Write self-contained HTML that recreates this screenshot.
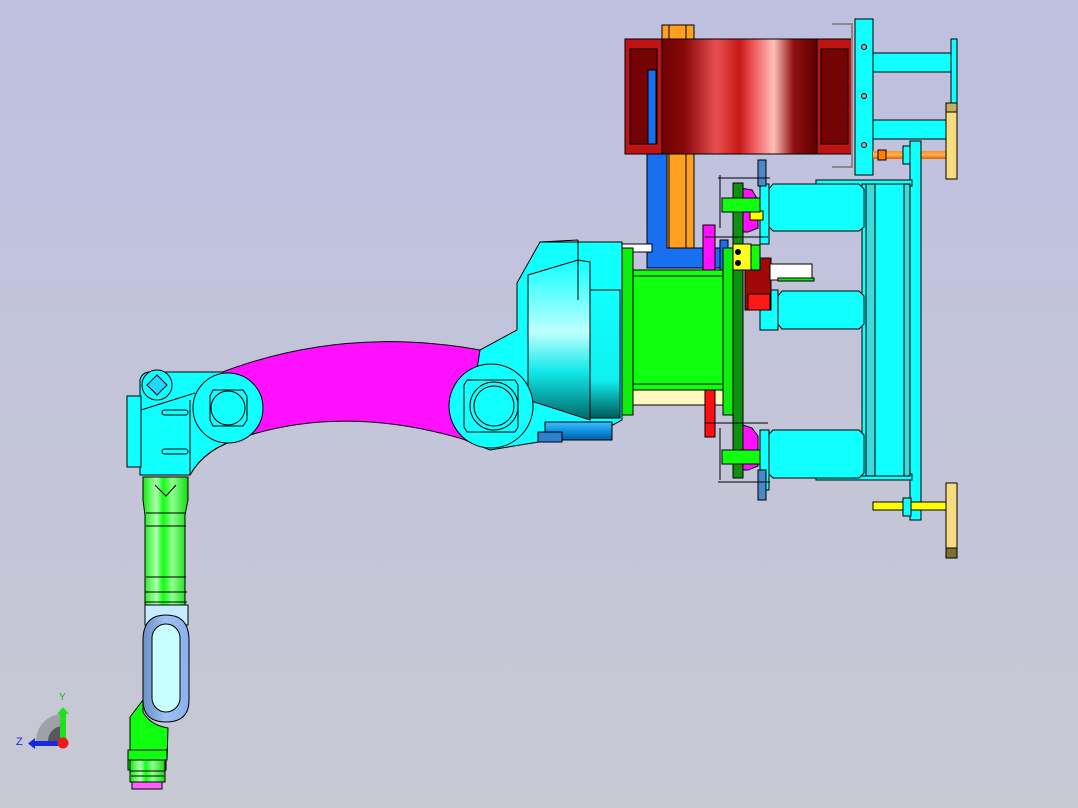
<!DOCTYPE html>
<html><head><meta charset="utf-8"><style>
html,body{margin:0;padding:0;width:1078px;height:808px;overflow:hidden}
svg{display:block}
</style></head><body>
<svg width="1078" height="808" viewBox="0 0 1078 808" xmlns="http://www.w3.org/2000/svg" stroke="#000" stroke-width="1">
<defs>
<linearGradient id="bg" x1="0" y1="0" x2="0" y2="1"><stop offset="0" stop-color="#bfc0e0"/><stop offset="1" stop-color="#c7c9d3"/></linearGradient>
<linearGradient id="drum" x1="0" x2="1"><stop offset="0" stop-color="#700000"/><stop offset=".15" stop-color="#8a0a0a"/><stop offset=".35" stop-color="#e85050"/><stop offset=".5" stop-color="#c81818"/><stop offset=".6" stop-color="#f06060"/><stop offset=".72" stop-color="#ffc0b8"/><stop offset=".85" stop-color="#901010"/><stop offset="1" stop-color="#600000"/></linearGradient>
<linearGradient id="cylV" x1="0" y1="0" x2="0" y2="1"><stop offset="0" stop-color="#10ffff"/><stop offset=".45" stop-color="#c0ffff"/><stop offset=".7" stop-color="#10e8e8"/><stop offset="1" stop-color="#006868"/></linearGradient>
<linearGradient id="cylV2" x1="0" y1="0" x2="0" y2="1"><stop offset="0" stop-color="#10ffff"/><stop offset=".7" stop-color="#10f0f0"/><stop offset="1" stop-color="#005a5a"/></linearGradient>
<linearGradient id="grn" x1="0" x2="1"><stop offset="0" stop-color="#10ee10"/><stop offset=".3" stop-color="#b0ffb0"/><stop offset=".45" stop-color="#10ff10"/><stop offset=".65" stop-color="#90ff90"/><stop offset="1" stop-color="#10dd10"/></linearGradient>
<linearGradient id="blu" x1="0" x2="1"><stop offset="0" stop-color="#6a90c8"/><stop offset=".5" stop-color="#a0c0f0"/><stop offset="1" stop-color="#88b0f0"/></linearGradient>
<linearGradient id="orod" x1="0" y1="0" x2="0" y2="1"><stop offset="0" stop-color="#ff9020"/><stop offset=".5" stop-color="#ffb050"/><stop offset="1" stop-color="#e06000"/></linearGradient>
<linearGradient id="bcyl" x1="0" y1="0" x2="0" y2="1"><stop offset="0" stop-color="#40c0ff"/><stop offset=".5" stop-color="#1090e0"/><stop offset="1" stop-color="#0060a0"/></linearGradient>
</defs>
<rect width="1078" height="808" fill="url(#bg)" stroke="none"/>

<rect x="662" y="25" width="32" height="225" fill="#ffa020"/>
<line x1="669" y1="25" x2="669" y2="250"/><line x1="686" y1="25" x2="686" y2="250"/>
<path d="M647 150 H667 V248 H722 V268 H647 Z" fill="#1870f0"/>
<rect x="720" y="240" width="8" height="30" fill="#1870f0"/>

<rect x="625" y="39" width="227" height="115" fill="#c01414"/>
<rect x="662" y="39" width="155" height="115" fill="url(#drum)"/>
<rect x="630" y="49" width="27" height="95" fill="#740404"/>
<rect x="648" y="70" width="8" height="74" fill="#1870f0"/>
<rect x="821" y="49" width="27" height="95" fill="#740404"/>
<path d="M832 24 H852 V167 H832" fill="none" stroke="#888" stroke-width="2"/>

<rect x="873" y="53" width="78" height="19" fill="#10ffff"/>
<rect x="873" y="120" width="73" height="19" fill="#10ffff"/>
<rect x="951" y="39" width="6" height="65" fill="#10ffff"/>
<rect x="855" y="19" width="18" height="156" fill="#10ffff"/>
<circle cx="864" cy="47" r="2.5" fill="#aaa"/><circle cx="864" cy="96" r="2.5" fill="#aaa"/><circle cx="864" cy="145" r="2.5" fill="#aaa"/>
<rect x="873" y="151" width="73" height="8" fill="url(#orod)" stroke="none"/>
<rect x="878" y="150" width="8" height="10" fill="#ff8000"/>
<rect x="903" y="146" width="8" height="18" fill="#10ffff"/>
<rect x="946" y="103" width="11" height="76" fill="#f8dc80"/>
<rect x="946" y="103" width="11" height="9" fill="#c4b060"/>

<rect x="910" y="141" width="11" height="379" fill="#10ffff"/>
<rect x="816" y="180" width="96" height="6" fill="#10ffff"/>
<rect x="816" y="474" width="96" height="6" fill="#10ffff"/>
<rect x="862" y="184" width="48" height="292" fill="#10ffff"/>
<rect x="866" y="184" width="9" height="292" fill="#40d8d8"/>
<rect x="904" y="184" width="6" height="292" fill="#40d8d8"/>

<path d="M773 184 H859 L864 189 V227 L859 231 H773 L769 227 V189 Z" fill="#10ffff"/>
<path d="M782 291 H859 L864 296 V324 L859 329 H782 L778 324 V296 Z" fill="#10ffff"/>
<path d="M773 430 H859 L864 435 V473 L859 478 H773 L768 473 V435 Z" fill="#10ffff"/>
<rect x="760" y="184" width="9" height="60" fill="#10ffff"/>
<rect x="760" y="430" width="9" height="60" fill="#10ffff"/>
<rect x="758" y="160" width="8" height="26" fill="#4a88cc"/>
<rect x="758" y="470" width="8" height="30" fill="#4a88cc"/>
<rect x="760" y="290" width="18" height="40" fill="#10ffff"/>

<path d="M740 188 L752 190 L758 200 V228 L748 232 L740 232 Z" fill="#ff10ff"/>
<path d="M740 424 L752 428 L758 436 V466 L748 470 L740 470 Z" fill="#ff10ff"/>
<rect x="750" y="211" width="13" height="9" fill="#ffff00"/>

<path d="M517 283 L540 242 H622 V420 L600 432 L520 445 L490 450 L465 440 L455 420 L462 380 L480 350 L517 330 Z" fill="#10ffff"/>
<path d="M528 275 L578 260 L590 262 V420 L528 400 Z" fill="url(#cylV)"/>
<path d="M578 240 V300 M540 242 L578 240" fill="none"/>
<rect x="590" y="290" width="30" height="128" fill="url(#cylV2)"/>
<rect x="622" y="244" width="30" height="8" fill="#fff"/>
<rect x="545" y="422" width="67" height="18" fill="url(#bcyl)"/>
<rect x="538" y="432" width="24" height="10" fill="#3080d0"/>

<rect x="633" y="388" width="90" height="17" fill="#fff8c0"/>
<rect x="633" y="270" width="90" height="120" fill="#10ff10"/>
<line x1="633" y1="276" x2="723" y2="276"/><line x1="633" y1="384" x2="723" y2="384"/>
<rect x="622" y="248" width="11" height="167" fill="#10ee10"/>
<rect x="723" y="248" width="10" height="167" fill="#10ee10"/>
<rect x="733" y="183" width="10" height="295" fill="#109010"/>
<rect x="703" y="225" width="12" height="45" fill="#ff10ff"/>
<rect x="705" y="390" width="10" height="47" fill="#ff1010"/>
<rect x="745" y="258" width="26" height="52" fill="#a00808"/>
<rect x="748" y="294" width="22" height="16" fill="#ff1818"/>
<rect x="733" y="244" width="18" height="26" fill="#ffff20"/>
<circle cx="738" cy="252" r="2.5" fill="#000"/><circle cx="738" cy="263" r="2.5" fill="#000"/>
<rect x="751" y="245" width="9" height="25" fill="#10ff10"/>
<rect x="770" y="264" width="42" height="16" fill="#fff"/>
<rect x="778" y="278" width="36" height="3" fill="#10ee10"/>
<rect x="722" y="198" width="38" height="14" fill="#10ff10"/>
<rect x="722" y="450" width="38" height="14" fill="#10ff10"/>
<path d="M720 175 V228 M718 178 H770 M720 428 V480 M718 482 H770 M705 237 H768 M705 423 H768" fill="none"/>

<rect x="873" y="502" width="73" height="8" fill="#ffff00"/>
<rect x="903" y="498" width="8" height="18" fill="#10ffff"/>
<rect x="946" y="483" width="11" height="75" fill="#f8dc80"/>
<rect x="946" y="548" width="11" height="10" fill="#807030"/>

<path d="M215 375 Q340 325 480 350 L466 440 Q350 405 250 435 Z" fill="#ff10ff"/>
<circle cx="491" cy="406" r="42" fill="#10ffff"/>
<path d="M467 380 H515 L518 385 V427 L515 432 H467 L464 427 V385 Z" fill="none"/>
<circle cx="494" cy="406" r="24" fill="none"/><circle cx="494" cy="406" r="20" fill="none"/>

<!-- elbow -->
<path d="M140 380 Q142 372 150 372 H222 L240 400 L242 438 Q205 448 190 475 H140 Z" fill="#10ffff"/>
<path d="M190 475 Q205 448 242 438" fill="none"/>
<line x1="190" y1="400" x2="190" y2="475"/>
<circle cx="228" cy="408" r="35" fill="#10ffff"/>
<path d="M213 390 H243 L247 396 V420 L243 426 H213 L210 420 V396 Z" fill="none"/>
<circle cx="228" cy="408" r="17" fill="none"/>
<circle cx="157" cy="385" r="15" fill="#10ffff"/>
<path d="M157 375 L167 385 L157 395 L147 385 Z" fill="#20d8ff"/>
<line x1="141" y1="410" x2="195" y2="393"/>
<rect x="127" y="396" width="14" height="71" fill="#10ffff"/>
<rect x="162" y="410" width="26" height="5" rx="2.5" fill="none"/>
<rect x="162" y="449" width="26" height="5" rx="2.5" fill="none"/>

<path d="M143 477 H188 V500 L185 515 V605 H145 V515 L143 500 Z" fill="url(#grn)"/>
<line x1="146" y1="513" x2="186" y2="513"/><line x1="146" y1="526" x2="186" y2="526"/><line x1="146" y1="577" x2="186" y2="577"/><line x1="145" y1="592" x2="187" y2="592"/><line x1="145" y1="602" x2="187" y2="602"/>
<path d="M155 485 L166 496 L176 485" fill="none"/>
<rect x="145" y="605" width="43" height="20" fill="#c8ecff"/>
<path d="M143 640 Q143 615 166 615 Q189 615 189 640 V700 Q189 722 166 722 Q143 722 143 700 Z" fill="url(#blu)"/>
<rect x="152" y="624" width="28" height="88" rx="14" fill="#c8ffff"/>
<path d="M143 700 L130 717 V760 H128 V770 H166 V760 H167 L168 728 Q150 725 143 712 Z" fill="#10ff10"/>
<rect x="128" y="750" width="39" height="10" fill="#10ff10"/>
<rect x="130" y="760" width="35" height="22" fill="url(#grn)"/>
<line x1="130" y1="771" x2="165" y2="771"/><line x1="131" y1="776" x2="164" y2="776"/>
<rect x="132" y="782" width="30" height="7" fill="#ff60ff"/>

<g stroke="none">
<path d="M36 741 A27 27 0 0 1 63 714 V741 Z" fill="#a0a0a8"/>
<path d="M48 741 A15 15 0 0 1 63 726 V741 Z" fill="#585860"/>
<rect x="60" y="712" width="6" height="30" fill="#20e020"/>
<path d="M57 714 L63 707 L69 714 Z" fill="#20e020"/>
<rect x="34" y="741" width="28" height="5" fill="#1828e0"/>
<path d="M35 738 L28 743.5 L35 749 Z" fill="#1828e0"/>
<circle cx="63" cy="743" r="5.5" fill="#f01818"/>
</g>
<text x="59" y="700" font-family="Liberation Sans, sans-serif" font-size="10" fill="#10c010" stroke="none">Y</text>
<text x="16" y="745" font-family="Liberation Sans, sans-serif" font-size="11" fill="#1828e0" stroke="none">Z</text>
</svg>
</body></html>
